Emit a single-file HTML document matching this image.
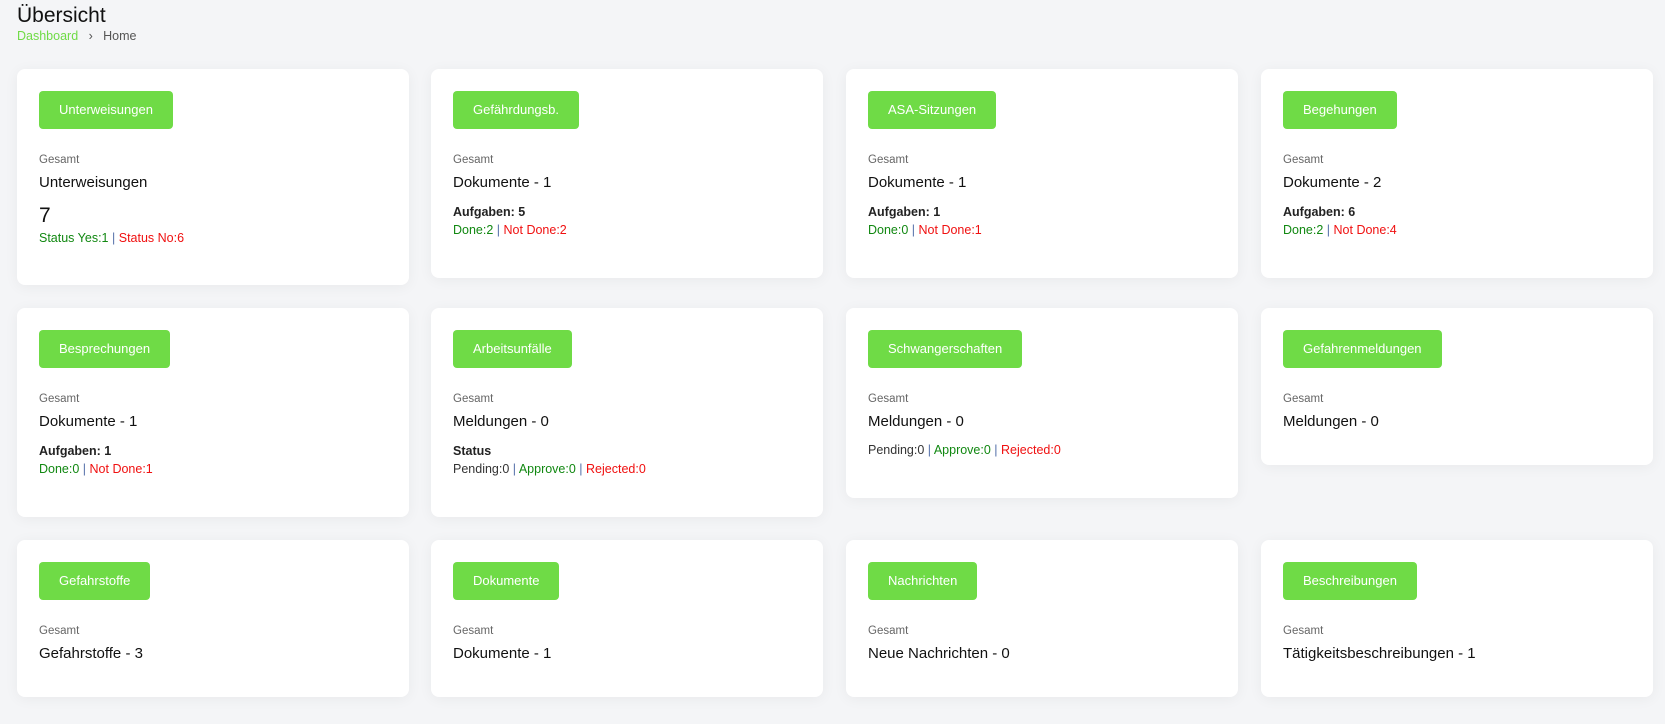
<!DOCTYPE html>
<html><head><meta charset="utf-8"><style>
body{margin:0;width:1665px;height:724px;background:#f4f5f7;font-family:"Liberation Sans",sans-serif;position:relative;overflow:hidden}
h1{position:absolute;left:17px;top:4px;margin:0;font-size:21px;font-weight:normal;color:#111}
.bc{position:absolute;left:17px;top:29px;font-size:12.5px;color:#555}
.bc .g{color:#6fdb46}
.card{position:absolute;width:392px;background:#fff;border-radius:8px;box-shadow:0 2px 14px rgba(0,0,0,.05)}
.btn{position:absolute;left:22px;top:22px;height:38px;line-height:38px;padding:0 20px;background:#6fdb46;color:#fff;font-size:13px;border-radius:4px}
.ges{position:absolute;left:22px;top:85px;font-size:11.5px;color:#666}
.tt{position:absolute;left:22px;top:105px;font-size:15px;color:#111}
.ln{position:absolute;left:22px;font-size:12.5px}
.b{font-weight:bold;color:#222}
.gr{color:#118811}.rd{color:#f01010}.sep{color:#5570aa}
</style></head><body>
<h1>Übersicht</h1>
<div class="bc"><span class="g">Dashboard</span> &nbsp;&nbsp;›&nbsp;&nbsp; Home</div>

<div class="card" style="left:17px;top:69px;height:216px"><div class="btn">Unterweisungen</div><div class="ges">Gesamt</div><div class="tt">Unterweisungen</div>
<div class="ln" style="top:135px;font-size:21px;color:#111">7</div><div class="ln" style="top:162px"><span class="gr">Status Yes:1</span> <span class="sep">|</span> <span class="rd">Status No:6</span></div></div>

<div class="card" style="left:431px;top:69px;height:209px"><div class="btn">Gefährdungsb.</div><div class="ges">Gesamt</div><div class="tt">Dokumente - 1</div>
<div class="ln b" style="top:136px">Aufgaben: 5</div><div class="ln" style="top:154px"><span class="gr">Done:2</span> <span class="sep">|</span> <span class="rd">Not Done:2</span></div></div>

<div class="card" style="left:846px;top:69px;height:209px"><div class="btn">ASA-Sitzungen</div><div class="ges">Gesamt</div><div class="tt">Dokumente - 1</div>
<div class="ln b" style="top:136px">Aufgaben: 1</div><div class="ln" style="top:154px"><span class="gr">Done:0</span> <span class="sep">|</span> <span class="rd">Not Done:1</span></div></div>

<div class="card" style="left:1261px;top:69px;height:209px"><div class="btn">Begehungen</div><div class="ges">Gesamt</div><div class="tt">Dokumente - 2</div>
<div class="ln b" style="top:136px">Aufgaben: 6</div><div class="ln" style="top:154px"><span class="gr">Done:2</span> <span class="sep">|</span> <span class="rd">Not Done:4</span></div></div>

<div class="card" style="left:17px;top:308px;height:209px"><div class="btn">Besprechungen</div><div class="ges">Gesamt</div><div class="tt">Dokumente - 1</div>
<div class="ln b" style="top:136px">Aufgaben: 1</div><div class="ln" style="top:154px"><span class="gr">Done:0</span> <span class="sep">|</span> <span class="rd">Not Done:1</span></div></div>

<div class="card" style="left:431px;top:308px;height:209px"><div class="btn">Arbeitsunfälle</div><div class="ges">Gesamt</div><div class="tt">Meldungen - 0</div>
<div class="ln b" style="top:136px">Status</div><div class="ln" style="top:154px;color:#333">Pending:0 <span class="sep">|</span> <span class="gr">Approve:0</span> <span class="sep">|</span> <span class="rd">Rejected:0</span></div></div>

<div class="card" style="left:846px;top:308px;height:190px"><div class="btn">Schwangerschaften</div><div class="ges">Gesamt</div><div class="tt">Meldungen - 0</div>
<div class="ln" style="top:135px;color:#333">Pending:0 <span class="sep">|</span> <span class="gr">Approve:0</span> <span class="sep">|</span> <span class="rd">Rejected:0</span></div></div>

<div class="card" style="left:1261px;top:308px;height:157px"><div class="btn">Gefahrenmeldungen</div><div class="ges">Gesamt</div><div class="tt">Meldungen - 0</div></div>

<div class="card" style="left:17px;top:540px;height:157px"><div class="btn">Gefahrstoffe</div><div class="ges">Gesamt</div><div class="tt">Gefahrstoffe - 3</div></div>
<div class="card" style="left:431px;top:540px;height:157px"><div class="btn">Dokumente</div><div class="ges">Gesamt</div><div class="tt">Dokumente - 1</div></div>
<div class="card" style="left:846px;top:540px;height:157px"><div class="btn">Nachrichten</div><div class="ges">Gesamt</div><div class="tt">Neue Nachrichten - 0</div></div>
<div class="card" style="left:1261px;top:540px;height:157px"><div class="btn">Beschreibungen</div><div class="ges">Gesamt</div><div class="tt">Tätigkeitsbeschreibungen - 1</div></div>
</body></html>
